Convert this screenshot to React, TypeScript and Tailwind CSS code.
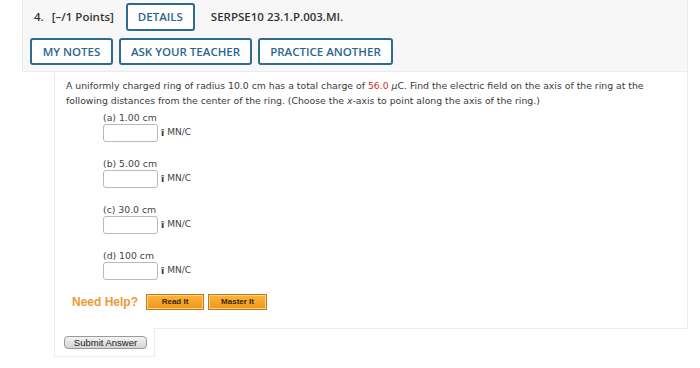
import React from "react";

const head = { fontFamily: '"Open Sans", "Liberation Sans", sans-serif' };
const body = { fontFamily: '"DejaVu Sans", Verdana, sans-serif' };
const arial = { fontFamily: '"Liberation Sans", Arial, sans-serif' };

const parts = [
  { label: "(a) 1.00 cm" },
  { label: "(b) 5.00 cm" },
  { label: "(c) 30.0 cm" },
  { label: "(d) 100 cm" },
];

function OutlineButton({ children, w }: { children: React.ReactNode; w: string }) {
  return (
    <button
      className={`${w} h-[27px] rounded-[3px] border-2 border-[#2f6b8e] bg-white text-[11.5px] font-semibold text-[#2b668c] leading-none`}
    >
      {children}
    </button>
  );
}

function HelpButton({ children, w }: { children: React.ReactNode; w: string }) {
  return (
    <button
      className={`${w} h-[16px] border border-[#c9781a] bg-gradient-to-b from-[#fbb53a] to-[#f0961c] text-[8px] font-bold leading-none text-[#3a2608] shadow-[inset_0_0_0_1px_#fbd27d]`}
      style={arial}
    >
      {children}
    </button>
  );
}

export default function App() {
  return (
    <div className="min-h-[368px] w-[700px] bg-white pl-[22px] pr-[12px] text-[#333]">
      {/* header */}
      <div className="h-[72px] border-x border-b border-[#ececec] bg-[#f7f7f7] pt-[3px]" style={head}>
        <div className="flex h-[28px] items-center pl-[11px] text-[11.5px] font-semibold text-[#333]">
          <span>4.</span>
          <span className="ml-[8px]">[–/1 Points]</span>
          <div className="ml-[12px] flex">
            <button className="h-[28px] w-[69px] rounded-[3px] border-2 border-[#2f6b8e] bg-white text-[11.5px] font-semibold leading-none text-[#2b668c]">
              DETAILS
            </button>
          </div>
          <span className="ml-[16px]">SERPSE10 23.1.P.003.MI.</span>
        </div>
        <div className="mt-[7px] flex gap-[6px] pl-[7px]">
          <OutlineButton w="w-[83px]">MY NOTES</OutlineButton>
          <OutlineButton w="w-[133px]">ASK YOUR TEACHER</OutlineButton>
          <OutlineButton w="w-[135px]">PRACTICE ANOTHER</OutlineButton>
        </div>
      </div>

      {/* content */}
      <div className="ml-[32px]">
        <div className="border-x border-[#ececec] pb-[18px] pt-[6px]" style={body}>
          <p className="pl-[11px] pr-[20px] text-[9.3px] leading-[15px] text-[#3a3a3a]">
            A uniformly charged ring of radius 10.0 cm has a total charge of{" "}
            <span className="text-[#d02a2a]">56.0</span> <i>μ</i>C. Find the electric field on the axis of the ring at the
            following distances from the center of the ring. (Choose the <i>x</i>-axis to point along the axis of the ring.)
          </p>

          <div className="ml-[48px] mt-[3px] flex flex-col gap-[15px]">
            {parts.map((p) => (
              <div key={p.label}>
                <div className="text-[9.3px] leading-[13px] text-[#444]">{p.label}</div>
                <div className="flex items-center">
                  <div className="h-[18px] w-[55px] rounded-[3px] border border-[#b9b9b9] bg-white" />
                  <span className="ml-[3px] text-[9.5px] font-bold text-[#333]">î</span>
                  <span className="ml-[3px] text-[9px] text-[#444]">MN/C</span>
                </div>
              </div>
            ))}
          </div>

          <div className="ml-[17px] mt-[14px] flex items-center">
            <span className="text-[12px] font-bold leading-[16px] text-[#ee9a35]" style={arial}>
              Need Help?
            </span>
            <div className="ml-[8px] flex gap-[4px]">
              <HelpButton w="w-[58px]">Read It</HelpButton>
              <HelpButton w="w-[59px]">Master It</HelpButton>
            </div>
          </div>
        </div>

        <div className="flex">
          <div className="flex w-[101px] border-x border-b border-[#ececec] pb-[7px] pl-[9px] pt-[8px]">
            <button
              className="h-[13px] w-[83px] rounded-[4px] border border-[#9a9a9a] bg-gradient-to-b from-[#f4f4f4] to-[#d4d4d4] text-[9.5px] leading-none text-[#222]"
              style={arial}
            >
              Submit Answer
            </button>
          </div>
          <div className="flex-1 border-t border-[#ececec]" />
        </div>
      </div>
    </div>
  );
}
